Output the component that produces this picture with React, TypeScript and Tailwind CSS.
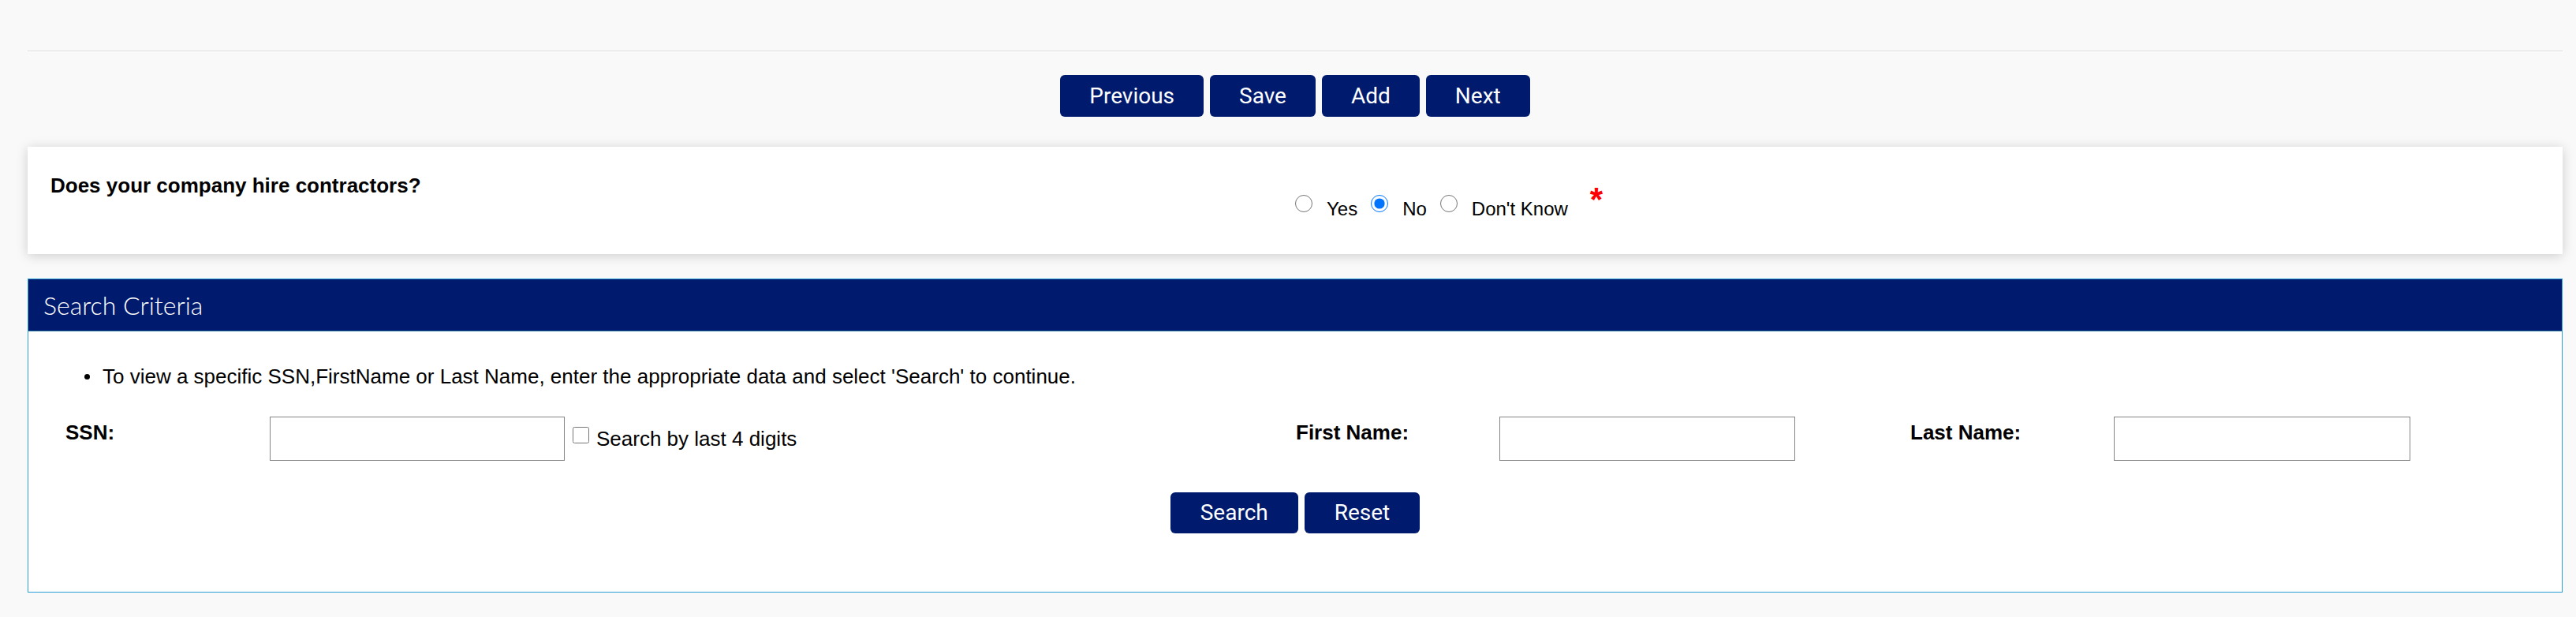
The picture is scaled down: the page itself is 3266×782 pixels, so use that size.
import { useState } from 'react';

const navBtn =
    "h-[53px] px-[37px] rounded-[6px] bg-[#001a6e] text-white text-[28px] leading-none font-['Roboto',sans-serif]";
const formBtn =
    "h-[52px] px-[38px] rounded-[6px] bg-[#001a6e] text-white text-[28px] leading-none font-['Roboto',sans-serif]";
const arial = "font-['Liberation_Sans',Arial,sans-serif]";

export default function App() {
    const [hires, setHires] = useState('no');
    const [last4, setLast4] = useState(false);

    return (
        <div className={`min-h-screen bg-[#f9f9f9] pl-[35px] pr-[17px] text-black ${arial}`}>
            <div className="h-[65px] border-b border-[#e2e2e2]" />

            {/* Wizard buttons */}
            <div className="flex justify-center gap-[8px] pt-[30px]">
                <button className={navBtn}>Previous</button>
                <button className={navBtn}>Save</button>
                <button className={navBtn}>Add</button>
                <button className={navBtn}>Next</button>
            </div>

            {/* Question */}
            <div className="mt-[38px] grid h-[136px] grid-cols-2 bg-white shadow-[0_2px_14px_rgba(0,0,0,0.18)]">
                <div className="pl-[29px] pt-[34px]">
                    <p className="text-[26px] font-bold leading-[30px]">Does your company hire contractors?</p>
                </div>
                <div className="flex items-start pt-[51px]">
                    <div className="mt-[10px] flex items-center text-[24px] leading-[28px]">
                        {[
                            { v: 'yes', l: 'Yes' },
                            { v: 'no', l: 'No' },
                            { v: 'dk', l: "Don't Know" },
                        ].map((o, i) => (
                            <label key={o.v} className={`flex items-center ${i > 0 ? 'ml-[17px]' : ''}`}>
                                <input
                                    type="radio"
                                    name="hires"
                                    checked={hires === o.v}
                                    onChange={() => setHires(o.v)}
                                    className="m-0 mb-[14px] h-[22px] w-[22px]"
                                />
                                <span className="ml-[18px]">{o.l}</span>
                            </label>
                        ))}
                    </div>
                    <span className="-mt-[5px] ml-[28px] text-[42px] font-bold leading-none text-[#ff0000]">*</span>
                </div>
            </div>

            {/* Search criteria */}
            <div className="mt-[31px] h-[398px] border border-[#2b9fd6] bg-white">
                <div className="flex h-[66px] items-center border-b border-[#1f6f9a] bg-[#001a6e] pl-[19px]">
                    <h2 className="font-['Lato',sans-serif] text-[32px] font-light text-white">Search Criteria</h2>
                </div>

                <div className="flex pl-[71px] pt-[42px] text-[26px] leading-[30px]">
                    <span className="mt-[12px] h-[7px] w-[7px] shrink-0 rounded-full bg-black" />
                    <p className="ml-[16px]">
                        To view a specific SSN,FirstName or Last Name, enter the appropriate data and select 'Search' to continue.
                    </p>
                </div>

                <div className="mt-[36px] flex items-start pl-[47px] text-[26px] leading-[30px]">
                    <div className="w-[259px] pt-[5px] font-bold">SSN:</div>
                    <div className="flex w-[1301px] items-center">
                        <input type="text" className="h-[56px] w-[374px] border border-[#858585] bg-white" />
                        <input
                            type="checkbox"
                            checked={last4}
                            onChange={() => setLast4(!last4)}
                            className="mb-[10px] ml-[10px] h-[21px] w-[21px]"
                        />
                        <span className="ml-[9px]">Search by last 4 digits</span>
                    </div>
                    <div className="w-[258px] pt-[5px] font-bold">First Name:</div>
                    <div className="w-[521px]">
                        <input type="text" className="h-[56px] w-[375px] border border-[#858585] bg-white" />
                    </div>
                    <div className="w-[258px] pt-[5px] font-bold">Last Name:</div>
                    <div>
                        <input type="text" className="h-[56px] w-[376px] border border-[#858585] bg-white" />
                    </div>
                </div>

                <div className="mt-[40px] flex justify-center gap-[8px]">
                    <button className={formBtn}>Search</button>
                    <button className={formBtn}>Reset</button>
                </div>
            </div>
        </div>
    );
}
